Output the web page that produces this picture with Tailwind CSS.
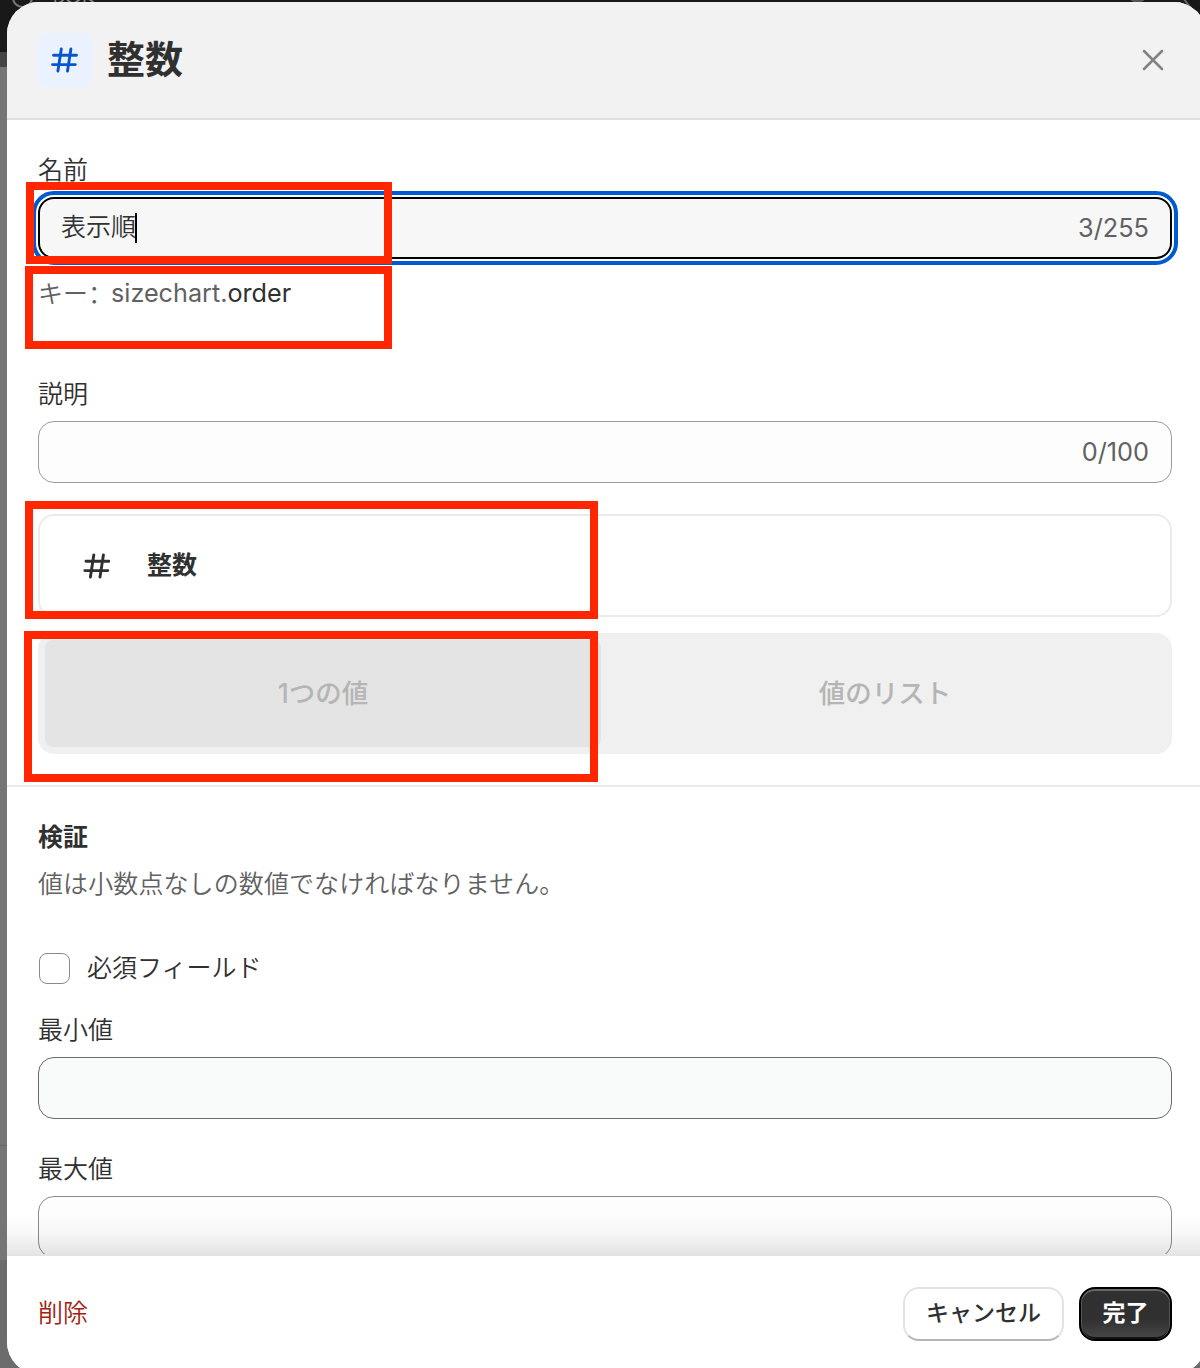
<!DOCTYPE html>
<html lang="ja">
<head>
<meta charset="utf-8">
<title>整数</title>
<script src="https://cdn.jsdelivr.net/npm/@tailwindcss/browser@4"></script>
</head>
<body class="font-[Inter,'Noto_Sans_CJK_JP',sans-serif] text-[25px] text-[#303030]">
<div class="relative h-[1368px] w-[1200px] overflow-hidden bg-[#757575] pt-[2px] pl-[7px]">
  <!-- page behind the dialog -->
  <div class="absolute inset-x-0 top-0 h-[52px] bg-[#191919]"></div>
  <div class="absolute left-0 top-[52px] h-[15px] w-10 bg-[#444]"></div>
  <div class="absolute left-0 top-[1145px] h-px w-10 bg-[#666]"></div>
  <div class="absolute bottom-0 left-0 h-[108px] w-full bg-[#6c6c6c]"></div>
  <div class="absolute left-[12px] -top-[13px] size-[21px] rounded-full border-2 border-[#777]"></div>
  <div class="absolute left-[50px] -top-[19px] text-[23px] leading-[24px] text-[#888]">検索</div>
  <div class="absolute left-[1128px] -top-[16px] size-[19px] rounded-full bg-[#555]"></div>
  <svg class="absolute left-[1180px] top-0" width="14" height="10" fill="none" stroke="#666" stroke-width="2"><path d="M3 -2 L11 8"/></svg>

  <div class="relative flex h-[1372px] w-[1199px] flex-col overflow-hidden rounded-[32px] bg-white">
    <header class="flex h-[118px] shrink-0 items-center border-b-2 border-[#e0e0e0] bg-[#f2f2f2] pl-[31px] pr-[41px]">
      <div class="flex size-[54px] items-center justify-center rounded-lg bg-[#eaf2ff]">
        <svg width="28" height="28" viewBox="0 0 28 28" fill="none" stroke="#0856cf" stroke-width="2.9" stroke-linecap="round"><path d="M10.3 3 L6.9 25 M19.9 3 L16.5 25 M2.5 9.2 H25.5 M1.5 18.6 H24.3"/></svg>
      </div>
      <h1 class="ml-[15px] pb-[2px] text-[38px] leading-[56px] font-semibold">整数</h1>
      <svg class="ml-auto" width="24" height="24" viewBox="0 0 24 24" fill="none" stroke="#828282" stroke-width="2.5" stroke-linecap="round"><path d="M3 3 L21 21 M21 3 L3 21"/></svg>
    </header>

    <main class="flex h-[1134px] shrink-0 flex-col overflow-hidden">
      <section class="flex h-[667px] shrink-0 flex-col border-b-2 border-[#ebebeb] pt-[35px] pl-[31px] pr-[34px]">
        <div class="h-[30px] leading-[30px] font-[350]">名前</div>
        <div class="mt-[12px] flex h-[62px] shrink-0 items-center justify-between rounded-[16px] border-2 border-black bg-[#f7f7f7] px-[21px] outline-4 outline-offset-2 outline-[#005bd3]">
          <div class="flex items-center font-[350]">表示順<span class="-ml-px h-[30px] w-[2px] bg-black"></span></div>
          <span class="text-[25.3px] text-[#616161]">3/255</span>
        </div>
        <div class="mt-[18px] flex h-8 items-center leading-8 text-[#616161]"><span class="w-[73px] font-[350] whitespace-nowrap">キー<span class="font-['Noto_Sans_CJK_SC']" lang="zh-CN">：</span></span><span class="text-[25.2px]">sizechart.</span><span class="text-[25.2px] text-[#303030]">order</span></div>
        <div class="mt-[70px] h-[30px] leading-[30px] font-[350]">説明</div>
        <div class="mt-[12px] flex h-[62px] shrink-0 items-center justify-end rounded-[16px] border-[1.5px] border-[#9b9b9b] bg-[#fdfdfd] px-[22px] text-[25.3px] text-[#616161]">0/100</div>
        <div class="mt-[31px] flex h-[103px] shrink-0 items-center rounded-[16px] border-2 border-[#ebebeb] pl-[42px]">
          <svg width="28" height="28" viewBox="0 0 28 28" fill="none" stroke="#303030" stroke-width="2.9" stroke-linecap="round"><path d="M11.8 3 L8.4 25 M21.4 3 L18 25 M4 9.2 H27 M2.8 18.6 H25.8"/></svg>
          <span class="ml-[37px] font-semibold">整数</span>
        </div>
        <div class="mt-4 flex h-[121px] shrink-0 rounded-[16px] bg-[#f0f0f0] p-[7px] text-[26.5px] font-medium text-[#b5b5b5]">
          <div class="flex w-[556px] items-center justify-center rounded-lg bg-[#e4e4e4] pt-px">1つの値</div>
          <div class="ml-[4px] flex flex-1 items-center justify-center pt-px">値のリスト</div>
        </div>
      </section>

      <section class="flex flex-col pt-[35px] pl-[31px] pr-[34px]">
        <h2 class="h-[30px] leading-[30px] font-bold">検証</h2>
        <p class="mt-[17px] h-[30px] leading-[30px] font-[350] tracking-[0.1px] text-[#616161]">値は小数点なしの数値でなければなりません。</p>
        <div class="mt-[54px] flex h-[31px] items-center pl-px">
          <span class="size-[31px] rounded-lg border-[1.5px] border-[#8a8a8a]"></span>
          <span class="ml-[17px] pb-px leading-[30px] font-[350]">必須フィールド</span>
        </div>
        <div class="mt-[31px] h-[30px] leading-[30px] font-[350]">最小値</div>
        <div class="mt-[12px] h-[62px] shrink-0 rounded-[16px] border-[1.5px] border-[#6a6a6a] bg-[#f9fafa]"></div>
        <div class="mt-[35px] h-[30px] leading-[30px] font-[350]">最大値</div>
        <div class="mt-[12px] h-[62px] shrink-0 rounded-[16px] border-[1.5px] border-[#8a8a8a] bg-[#fdfdfd]"></div>
      </section>
    </main>
    <!-- scroll fade above the footer -->
    <div class="absolute inset-x-0 top-[1212px] h-10 bg-linear-to-b from-black/0 via-black/3 to-black/10"></div>

    <footer class="flex h-[119px] shrink-0 items-center border-t-2 border-[#e3e3e3] bg-white pb-[2px] pl-[31px] pr-[34px]">
      <span class="font-[350] text-[#a3200d]">削除</span>
      <button class="ml-auto h-[54px] w-[161px] rounded-[16px] border-2 border-[#e3e3e3] border-b-[#b5b5b5] bg-white pb-px text-[23px] font-medium">キャンセル</button>
      <button class="ml-[15px] h-[54px] w-[93px] rounded-[16px] border-2 border-black bg-linear-to-b from-[#303030] from-60% to-[#484848] pb-px text-[23px] font-semibold text-white shadow-[inset_0_2px_0_#666,inset_1px_0_0_#555,inset_-1px_0_0_#555,inset_0_-2px_0_#111]">完了</button>
    </footer>
  </div>

  <!-- highlight annotations -->
  <div class="absolute left-[26px] top-[182px] h-[82px] w-[366px] border-8 border-[#ff2600]"></div>
  <div class="absolute left-[25px] top-[266px] h-[83px] w-[367px] border-8 border-[#ff2600]"></div>
  <div class="absolute left-[25px] top-[501px] h-[118px] w-[573px] border-8 border-[#ff2600]"></div>
  <div class="absolute left-[24px] top-[631px] h-[151px] w-[574px] border-8 border-[#ff2600]"></div>
</div>
</body>
</html>
